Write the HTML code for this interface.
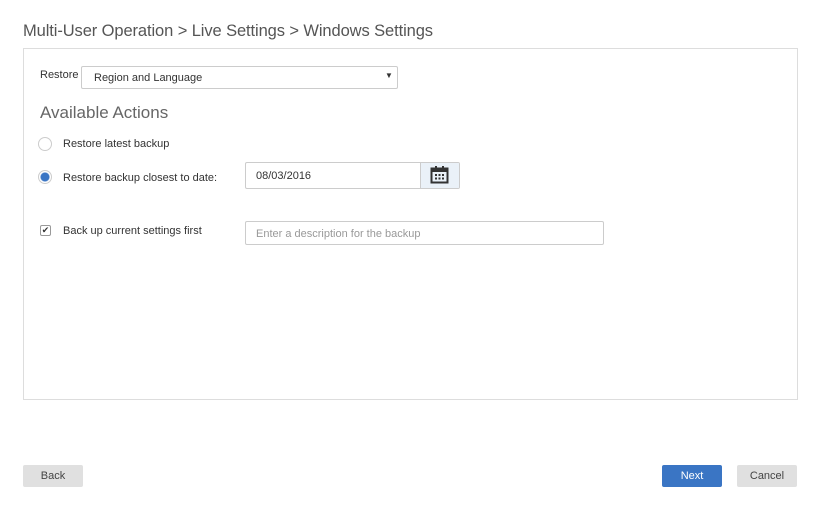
<!DOCTYPE html>
<html><head><style>
body{margin:0;width:819px;height:506px;background:#fff;font-family:"Liberation Sans",sans-serif;color:#333;position:relative;overflow:hidden}
.a{position:absolute}
.t{font-size:11px;color:#333}
</style></head><body>
<div class="a" style="left:23px;top:22px;font-size:16.5px;color:#555;letter-spacing:-0.1px">Multi-User Operation &gt; Live Settings &gt; Windows Settings</div>
<div class="a" style="left:23px;top:48px;width:773px;height:350px;border:1px solid #ddd"></div>
<div class="a t" style="left:40px;top:69px">Restore</div>
<div class="a" style="left:81px;top:66px;width:315px;height:21px;border:1px solid #ccc;border-radius:2px"></div>
<div class="a t" style="left:94px;top:72px">Region and Language</div>
<div class="a" style="left:385px;top:71px;font-size:8px">▼</div>
<div class="a" style="left:40px;top:103px;font-size:17px;color:#666">Available Actions</div>
<div class="a" style="left:38px;top:137px;width:12px;height:12px;border:1px solid #ccc;border-radius:50%"></div>
<div class="a t" style="left:63px;top:138px">Restore latest backup</div>
<div class="a" style="left:38px;top:170px;width:12px;height:12px;border:1px solid #ccc;border-radius:50%;background:radial-gradient(circle,#3a75c4 4px,#fff 5px)"></div>
<div class="a t" style="left:63px;top:172px">Restore backup closest to date:</div>
<div class="a" style="left:245px;top:162px;width:213px;height:25px;border:1px solid #ccc;border-radius:2px;overflow:hidden"><div style="position:absolute;left:174px;top:0;width:39px;height:25px;background:#eaf1f8;border-left:1px solid #ccc"></div></div>
<svg class="a" style="left:430px;top:165px" width="19" height="19" viewBox="0 0 19 19"><rect x="1.5" y="3.5" width="16" height="14" fill="none" stroke="#333" stroke-width="2"/><rect x="1" y="3" width="17" height="4" fill="#333"/><rect x="5" y="1" width="2" height="4" fill="#333"/><rect x="12" y="1" width="2" height="4" fill="#333"/><g fill="#333"><rect x="5" y="9" width="2" height="2"/><rect x="8.5" y="9" width="2" height="2"/><rect x="12" y="9" width="2" height="2"/><rect x="5" y="12.5" width="2" height="2"/><rect x="8.5" y="12.5" width="2" height="2"/><rect x="12" y="12.5" width="2" height="2"/></g></svg>
<div class="a t" style="left:256px;top:170px">08/03/2016</div>
<div class="a" style="left:40px;top:225px;width:9px;height:9px;border:1px solid #999;border-radius:2px;font-size:9px;line-height:9px;text-align:center">✔</div>
<div class="a t" style="left:63px;top:225px">Back up current settings first</div>
<div class="a" style="left:245px;top:221px;width:357px;height:22px;border:1px solid #ccc;border-radius:2px"></div>
<div class="a t" style="left:256px;top:228px;color:#999">Enter a description for the backup</div>
<div class="a" style="left:23px;top:465px;width:60px;height:22px;background:#e0e0e0;border-radius:2px;font-size:11px;line-height:23px;text-align:center;color:#444">Back</div>
<div class="a" style="left:662px;top:465px;width:60px;height:22px;background:#3a75c4;border-radius:2px;font-size:11px;line-height:23px;text-align:center;color:#fff">Next</div>
<div class="a" style="left:737px;top:465px;width:60px;height:22px;background:#e0e0e0;border-radius:2px;font-size:11px;line-height:23px;text-align:center;color:#444">Cancel</div>
</body></html>
